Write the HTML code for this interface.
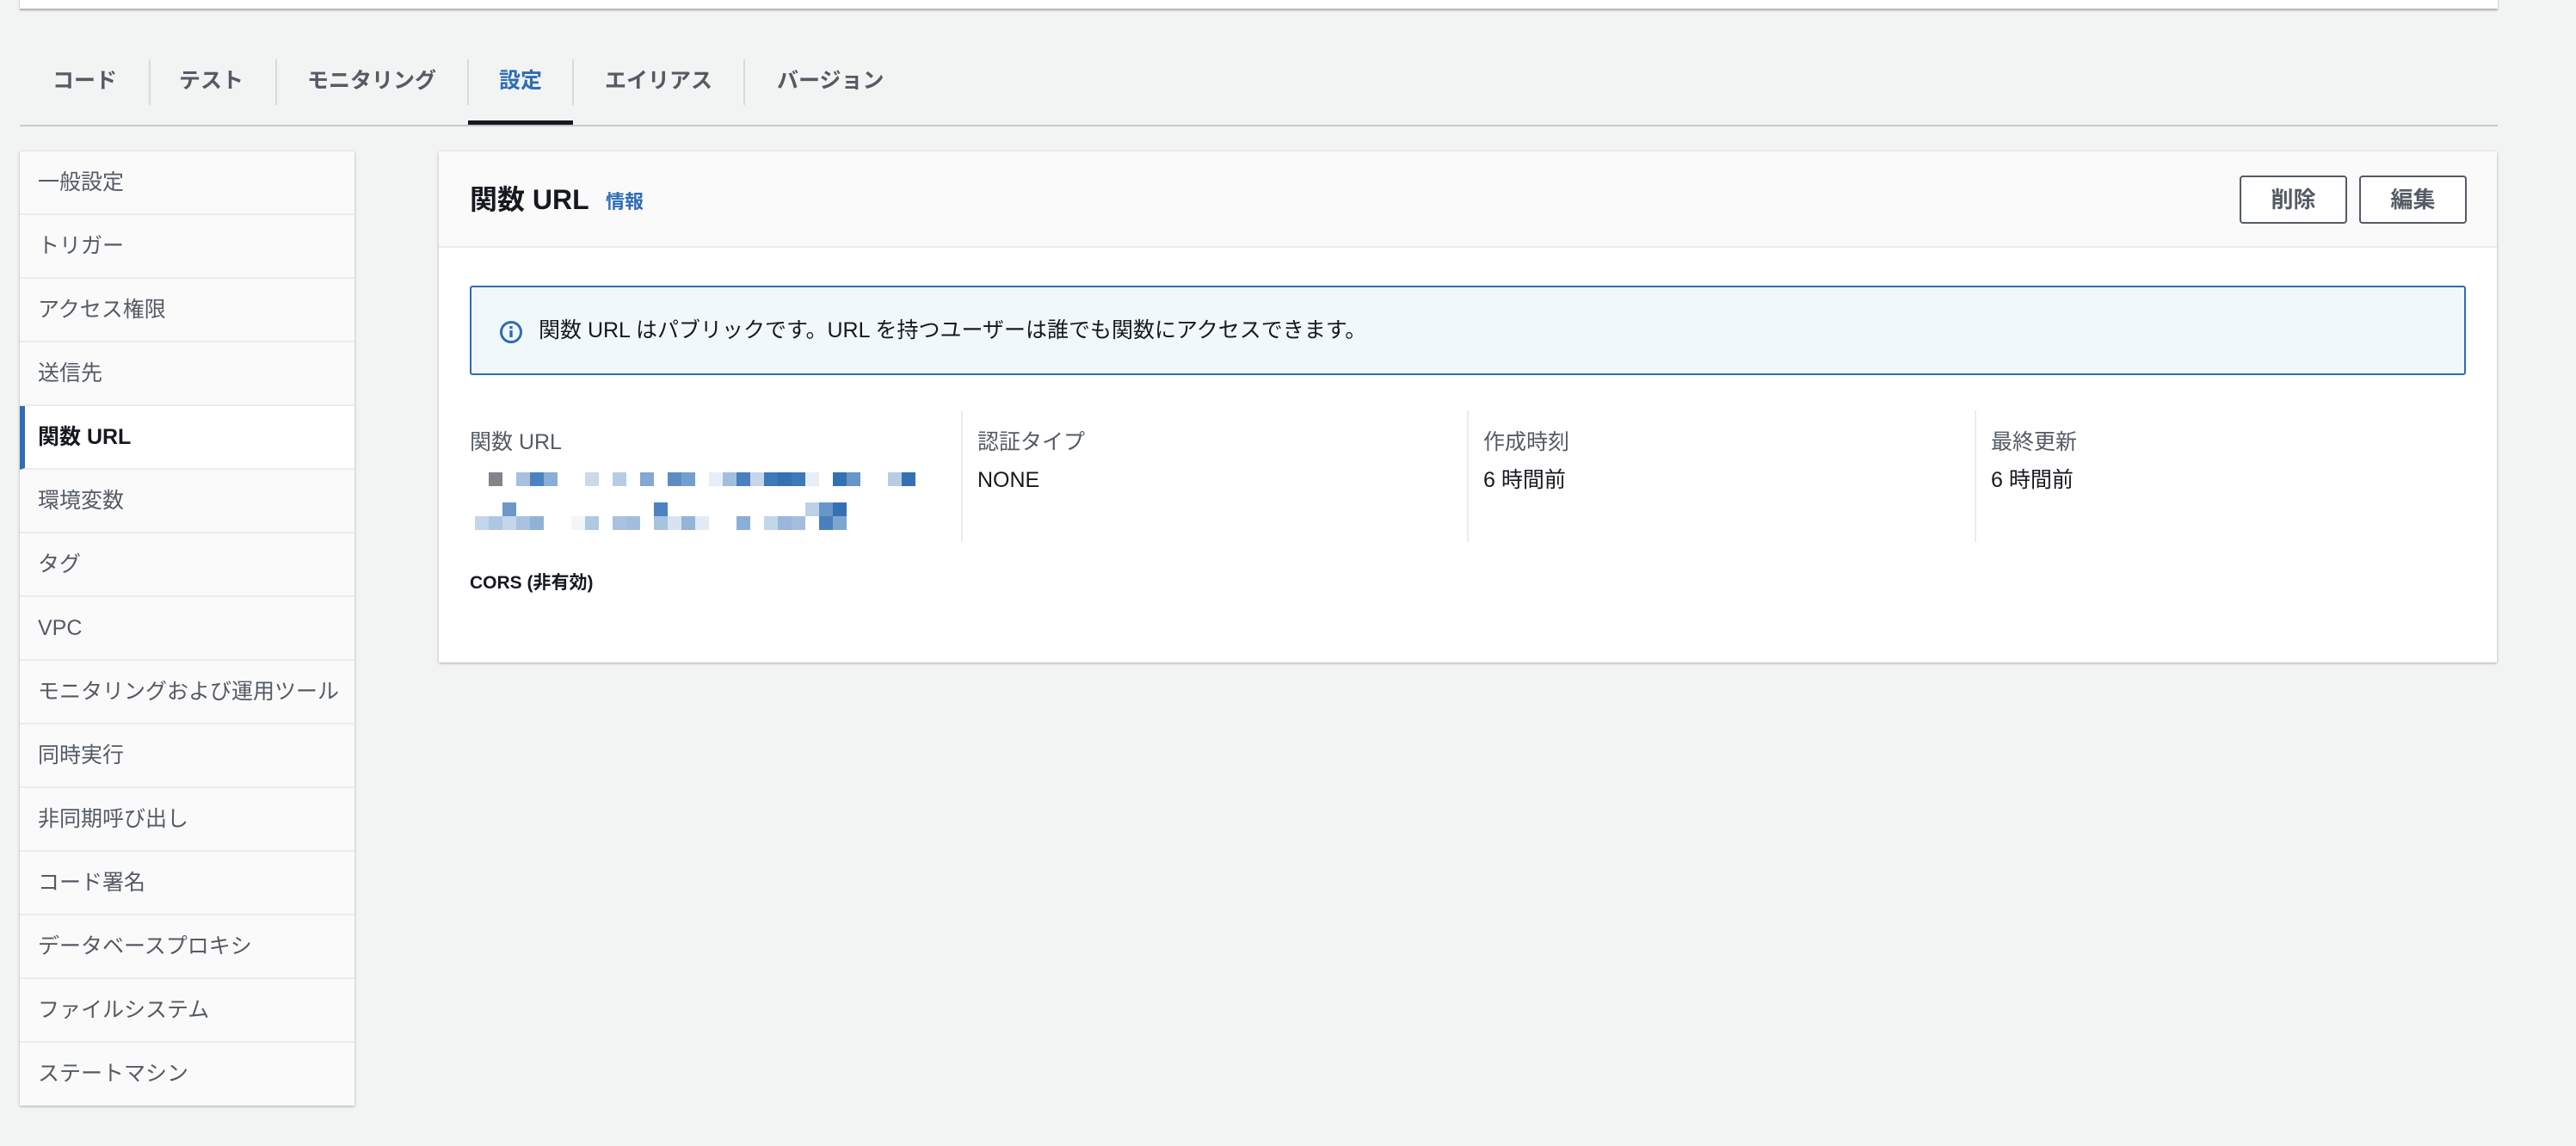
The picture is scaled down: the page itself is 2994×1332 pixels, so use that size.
<!DOCTYPE html>
<html><head><meta charset="utf-8"><style>
*{margin:0;padding:0;box-sizing:border-box}
body{width:2994px;height:1332px;background:#f2f3f3;font-family:"Liberation Sans","Noto Sans CJK JP",sans-serif;color:#16191f;position:relative;overflow:hidden;font-size:26px}
.a{position:absolute}
.topcard{left:23px;top:-4px;width:2880px;height:14px;background:#fff;box-shadow:0 2px 2px rgba(0,0,0,.3)}
.tab{position:absolute;top:76px;font-weight:bold;color:#545b64;font-size:25px;line-height:36px}
.sep{position:absolute;top:69px;width:2px;height:53px;background:#d5dbdb}
.side{left:23px;top:176px;width:389px;height:1109px;background:#fafafa;box-shadow:0 1px 3px rgba(0,0,0,.3)}
.item{position:absolute;left:0;width:389px;height:74px;border-bottom:2px solid #eaeded;padding-left:21px;line-height:72px;color:#545b64;font-size:25px;white-space:nowrap}
.item.act{background:#fff;color:#16191f;font-weight:bold;border-left:6px solid #2e6cb5;padding-left:15px}
.panel{left:510px;top:176px;width:2392px;height:594px;background:#fff;box-shadow:0 1px 3px rgba(0,0,0,.3)}
.hdr{position:absolute;left:0;top:0;width:100%;height:112px;background:#fafafa;border-bottom:2px solid #eaeded}
.btn{position:absolute;top:28px;width:125px;height:56px;border:2px solid #545b64;border-radius:4px;background:#fff;color:#545b64;font-weight:bold;text-align:center;line-height:52px;font-size:26px}
.lbl{position:absolute;top:320px;color:#545b64;font-size:25px;line-height:36px}
.val{position:absolute;top:364px;font-size:25px;line-height:36px}
.vd{position:absolute;top:301px;width:2px;height:153px;background:#eaeded}
.b{position:absolute;width:16px;height:16px}
</style></head><body>
<div class="a topcard"></div>
<div class="tab" style="left:61px">コード</div>
<div class="sep" style="left:173px"></div>
<div class="tab" style="left:208px">テスト</div>
<div class="sep" style="left:320px"></div>
<div class="tab" style="left:357px">モニタリング</div>
<div class="sep" style="left:543px"></div>
<div class="tab" style="left:580px;color:#2e6cb5">設定</div>
<div class="sep" style="left:665px"></div>
<div class="tab" style="left:703px">エイリアス</div>
<div class="sep" style="left:864px"></div>
<div class="tab" style="left:903px">バージョン</div>
<div class="a" style="left:23px;top:145px;width:2880px;height:2px;background:#c6cbcb"></div>
<div class="a" style="left:544px;top:140px;width:122px;height:5px;background:#16191f"></div>

<div class="a side">
<div class="item" style="top:0">一般設定</div>
<div class="item" style="top:74px">トリガー</div>
<div class="item" style="top:148px">アクセス権限</div>
<div class="item" style="top:222px">送信先</div>
<div class="item act" style="top:296px">関数 URL</div>
<div class="item" style="top:370px">環境変数</div>
<div class="item" style="top:444px">タグ</div>
<div class="item" style="top:518px">VPC</div>
<div class="item" style="top:592px">モニタリングおよび運用ツール</div>
<div class="item" style="top:666px">同時実行</div>
<div class="item" style="top:740px">非同期呼び出し</div>
<div class="item" style="top:814px">コード署名</div>
<div class="item" style="top:888px">データベースプロキシ</div>
<div class="item" style="top:962px">ファイルシステム</div>
<div class="item" style="top:1036px;border-bottom:none">ステートマシン</div>
</div>

<div class="a panel">
<div class="hdr">
<div class="a" style="left:36px;top:34px;font-size:32px;font-weight:bold;line-height:44px">関数 URL</div>
<div class="a" style="left:194px;top:44px;font-size:22px;font-weight:bold;color:#2e6cb5;line-height:30px">情報</div>
<div class="btn" style="left:2093px">削除</div>
<div class="btn" style="left:2232px">編集</div>
</div>
<div class="a" style="left:36px;top:156px;width:2320px;height:104px;background:#f1f8fc;border:2px solid #2e6cb5;border-radius:3px">
<svg class="a" style="left:32px;top:38px" width="28" height="28" viewBox="0 0 28 28"><circle cx="14" cy="14" r="11.5" fill="none" stroke="#2e6cb5" stroke-width="3"/><rect x="12.3" y="12" width="3.4" height="8" fill="#2e6cb5"/><rect x="12.3" y="7" width="3.4" height="3.2" fill="#2e6cb5"/></svg>
<div class="a" style="left:78px;top:32px;font-size:25px;line-height:36px">関数 URL はパブリックです。URL を持つユーザーは誰でも関数にアクセスできます。</div>
</div>
<div class="lbl" style="left:36px">関数 URL</div>
<div class="vd" style="left:607px"></div>
<div class="lbl" style="left:626px">認証タイプ</div>
<div class="val" style="left:626px">NONE</div>
<div class="vd" style="left:1195px"></div>
<div class="lbl" style="left:1214px">作成時刻</div>
<div class="val" style="left:1214px">6 時間前</div>
<div class="vd" style="left:1785px"></div>
<div class="lbl" style="left:1804px">最終更新</div>
<div class="val" style="left:1804px">6 時間前</div>
<div class="a" style="left:36px;top:487px;font-size:21px;font-weight:bold;line-height:30px">CORS (非有効)</div>
</div>

<div class="a" style="left:0;top:0">
<div class="b" style="left:568px;top:549px;background:#80848b"></div>
<div class="b" style="left:600px;top:549px;background:#a6c0de"></div>
<div class="b" style="left:616px;top:549px;background:#4a83c0"></div>
<div class="b" style="left:632px;top:549px;background:#8aaed6"></div>
<div class="b" style="left:680px;top:549px;background:#c9dbeb"></div>
<div class="b" style="left:712px;top:549px;background:#b5cce4"></div>
<div class="b" style="left:744px;top:549px;background:#82a8d3"></div>
<div class="b" style="left:776px;top:549px;background:#5b8dc4"></div>
<div class="b" style="left:792px;top:549px;background:#729fd0"></div>
<div class="b" style="left:824px;top:549px;background:#e6eef7"></div>
<div class="b" style="left:840px;top:549px;background:#a3bedd"></div>
<div class="b" style="left:856px;top:549px;background:#4a80bf"></div>
<div class="b" style="left:872px;top:549px;background:#c4d6ea"></div>
<div class="b" style="left:888px;top:549px;background:#3d79ba"></div>
<div class="b" style="left:904px;top:549px;background:#3371b5"></div>
<div class="b" style="left:920px;top:549px;background:#3d79ba"></div>
<div class="b" style="left:936px;top:549px;background:#e6eef7"></div>
<div class="b" style="left:968px;top:549px;background:#3371b5"></div>
<div class="b" style="left:984px;top:549px;background:#6796c8"></div>
<div class="b" style="left:1032px;top:549px;background:#b5cce4"></div>
<div class="b" style="left:1048px;top:549px;background:#3371b5"></div>
<div class="b" style="left:584px;top:584px;background:#6a98c9"></div>
<div class="b" style="left:760px;top:584px;background:#4a83c0"></div>
<div class="b" style="left:936px;top:584px;background:#bcd0e7"></div>
<div class="b" style="left:952px;top:584px;background:#6796c8"></div>
<div class="b" style="left:968px;top:584px;background:#3371b5"></div>
<div class="b" style="left:552px;top:600px;background:#c4d6ea"></div>
<div class="b" style="left:568px;top:600px;background:#adc6e2"></div>
<div class="b" style="left:584px;top:600px;background:#c4d6ea"></div>
<div class="b" style="left:600px;top:600px;background:#a8c2df"></div>
<div class="b" style="left:616px;top:600px;background:#8fb2d7"></div>
<div class="b" style="left:664px;top:600px;background:#f2f6fb"></div>
<div class="b" style="left:680px;top:600px;background:#b0c9e3"></div>
<div class="b" style="left:712px;top:600px;background:#a8c2df"></div>
<div class="b" style="left:728px;top:600px;background:#a3bedd"></div>
<div class="b" style="left:760px;top:600px;background:#a8c2df"></div>
<div class="b" style="left:776px;top:600px;background:#d7e3f1"></div>
<div class="b" style="left:792px;top:600px;background:#94b4d8"></div>
<div class="b" style="left:808px;top:600px;background:#e2ebf5"></div>
<div class="b" style="left:856px;top:600px;background:#8aaed6"></div>
<div class="b" style="left:888px;top:600px;background:#c4d6ea"></div>
<div class="b" style="left:904px;top:600px;background:#98b7da"></div>
<div class="b" style="left:920px;top:600px;background:#a3bedd"></div>
<div class="b" style="left:952px;top:600px;background:#4a80bf"></div>
<div class="b" style="left:968px;top:600px;background:#7fa5d1"></div>
</div>
</body></html>
